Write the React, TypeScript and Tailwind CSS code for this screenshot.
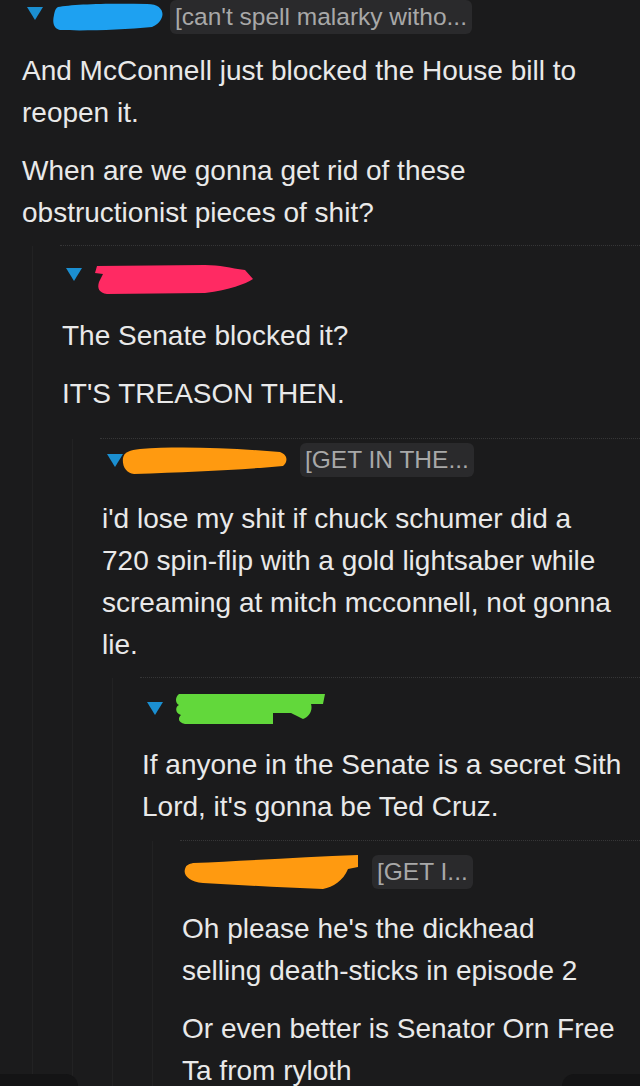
import type { ReactNode } from "react";

const FONT = { fontFamily: '"Liberation Sans", Arial, sans-serif' };

function Triangle({ className = "" }: { className?: string }) {
  return (
    <svg width="16" height="13" viewBox="0 0 16 13" className={"shrink-0 " + className}>
      <polygon points="0,0 16,0 8,13" fill="#1b8fd1" />
    </svg>
  );
}

function Flair({ text, className = "" }: { text: string; className?: string }) {
  return (
    <span
      className={
        "inline-flex h-[34px] shrink-0 items-center whitespace-nowrap rounded-[6px] bg-[#2a2a2c] px-[5px] text-[24.5px] text-[#a8a8a8] " +
        className
      }
    >
      {text}
    </span>
  );
}

// redaction scribbles, drawn over the usernames
function BlueScribble() {
  return (
    <svg width="111" height="28" viewBox="0 0 111 28" className="ml-[9px] shrink-0">
      <path
        d="M6 4 C20 1 60 0 95 1 C108 1 112 8 110 14 C108 20 104 22 100 24 C70 27 30 28 8 27 C2 26 0 20 2 12 C3 7 4 5 6 4 Z"
        fill="#1ea1f1"
      />
    </svg>
  );
}

function PinkScribble() {
  return (
    <svg width="158" height="30" viewBox="0 0 158 30" className="ml-[13px] shrink-0">
      <path
        d="M2 2 L110 1 C125 1 135 4 150 6 L158 15 C150 20 135 26 110 29 L12 30 C4 29 2 24 4 18 L8 10 L0 9 Z"
        fill="#ff2a63"
      />
    </svg>
  );
}

function OrangeScribble() {
  return (
    <svg width="168" height="28" viewBox="0 0 168 28" className="-ml-[3px] shrink-0">
      <path
        d="M20 3 C60 0 110 2 160 6 C168 9 168 16 163 20 C120 24 70 26 14 28 C6 27 2 20 3 12 C4 6 10 4 20 3 Z"
        fill="#ff9a10"
      />
    </svg>
  );
}

function GreenScribble() {
  return (
    <svg width="152" height="31" viewBox="0 0 152 31" className="ml-[10px] shrink-0">
      <path
        d="M6 1 L152 1 L150 11 L138 11 C140 18 136 24 130 26 L118 20 L100 20 L100 31 L12 31 C6 30 4 26 8 22 C2 20 2 14 6 12 C2 10 2 4 6 1 Z"
        fill="#62d83b"
      />
    </svg>
  );
}

function OrangeScribble2() {
  return (
    <svg width="175" height="34" viewBox="0 0 175 34" className="-ml-[19px] shrink-0">
      <path
        d="M10 8 C60 6 120 2 175 0 L175 12 L165 14 C160 26 150 32 140 34 C100 33 60 30 20 28 C6 27 0 20 2 14 C3 10 6 9 10 8 Z"
        fill="#ff9a10"
      />
    </svg>
  );
}

function Comment({
  header,
  paras,
  bodyClass,
  children,
}: {
  header: ReactNode;
  paras: string[];
  bodyClass: string;
  children?: ReactNode;
}) {
  return (
    <div>
      <div className="flex h-[34px] items-center">{header}</div>
      <div className={bodyClass}>
        {paras.map((p, i) => (
          <p key={i} className={i > 0 ? "mt-4" : ""}>
            {p}
          </p>
        ))}
      </div>
      {children}
    </div>
  );
}

function Reply({ sepTop, headTop, children }: { sepTop: string; headTop: string; children: ReactNode }) {
  return (
    <div className="ml-[10px]">
      <div className={"ml-[28px] border-t border-dotted border-[#363637] " + sepTop} />
      <div className={"border-l border-[#222223] pl-[29px] " + headTop}>{children}</div>
    </div>
  );
}

export default function App() {
  return (
    <div
      className="relative h-[1086px] w-[640px] overflow-hidden bg-[#1b1b1c] text-[28px] leading-[42px] text-[#e9e9e9]"
      style={FONT}
    >
      <div className="pl-[22px]">
        <Comment
          header={
            <>
              <Triangle className="ml-[5px] -mt-[8px]" />
              <BlueScribble />
              <Flair text="[can't spell malarky witho..." className="ml-[7px]" />
            </>
          }
          bodyClass="mt-[16px] pr-[18px]"
          paras={[
            "And McConnell just blocked the House bill to reopen it.",
            "When are we gonna get rid of these obstructionist pieces of shit?",
          ]}
        >
          <Reply sepTop="mt-[11px]" headTop="pt-[16px]">
            <Comment
              header={
                <>
                  <Triangle className="ml-[4px] -mt-[10px]" />
                  <PinkScribble />
                </>
              }
              bodyClass="mt-[19px] pr-[18px]"
              paras={["The Senate blocked it?", "IT'S TREASON THEN."]}
            >
              <Reply sepTop="mt-[23px]" headTop="pt-[4px]">
                <Comment
                  header={
                    <>
                      <Triangle className="ml-[5px]" />
                      <OrangeScribble />
                      <Flair text="[GET IN THE..." className="ml-[12px]" />
                    </>
                  }
                  bodyClass="mt-[21px] pr-[18px]"
                  paras={[
                    "i'd lose my shit if chuck schumer did a 720 spin-flip with a gold lightsaber while screaming at mitch mcconnell, not gonna lie.",
                  ]}
                >
                  <Reply sepTop="mt-[11px]" headTop="pt-[13px]">
                    <Comment
                      header={
                        <>
                          <Triangle className="ml-[5px]" />
                          <GreenScribble />
                        </>
                      }
                      bodyClass="mt-[19px] pr-[14px]"
                      paras={["If anyone in the Senate is a secret Sith Lord, it's gonna be Ted Cruz."]}
                    >
                      <Reply sepTop="mt-[12px]" headTop="pt-[14px]">
                        <Comment
                          header={
                            <>
                              <Triangle className="ml-[4px]" />
                              <OrangeScribble2 />
                              <Flair text="[GET I..." className="ml-[14px]" />
                            </>
                          }
                          bodyClass="mt-[19px] pr-[22px]"
                          paras={[
                            "Oh please he's the dickhead selling death-sticks in episode 2",
                            "Or even better is Senator Orn Free Ta from ryloth",
                          ]}
                        />
                      </Reply>
                    </Comment>
                  </Reply>
                </Comment>
              </Reply>
            </Comment>
          </Reply>
        </Comment>
      </div>
      {/* bottom toolbar corners peeking in */}
      <div className="absolute bottom-0 left-0 h-[12px] w-[78px] rounded-tr-[14px] bg-[#141415]" />
      <div className="absolute bottom-0 right-0 h-[12px] w-[78px] rounded-tl-[14px] bg-[#141415]" />
    </div>
  );
}
